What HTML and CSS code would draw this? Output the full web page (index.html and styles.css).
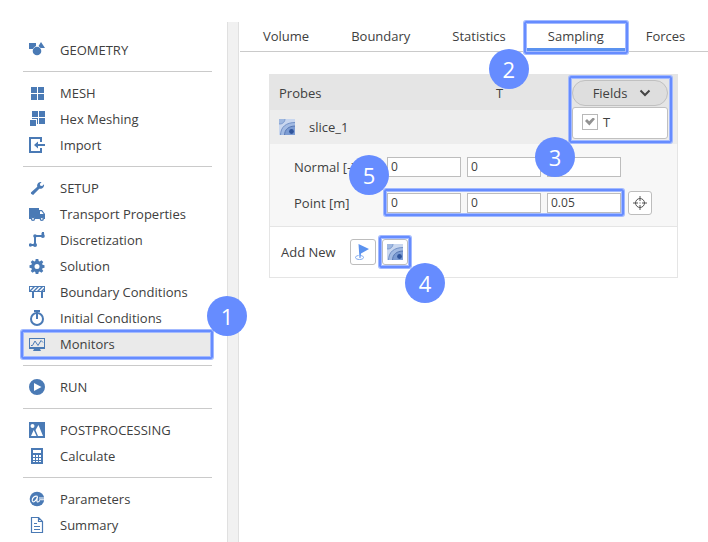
FILE: index.html
```html
<!DOCTYPE html>
<html lang="en">
<head>
<meta charset="utf-8">
<title>Monitors - Sampling</title>
<link rel="stylesheet" href="styles.css">
</head>
<body>
<svg class="defs" aria-hidden="true">
  <symbol id="slice" viewBox="0 0 16 16">
    <path fill="#c9d7ef" d="M0 0h16v16H0z"/>
    <circle cx="1" cy="0" r="5" fill="#9fb8e0" stroke="#7f9dce"/>
    <path fill="#a3bbe3" stroke="#7391c6" d="M1.500 16.500C1.500 8 7 3.500 16.500 3.500v13z"/>
    <path fill="#7c9cd3" stroke="#5878b3" d="M5.500 16.500C5.500 10.500 9.500 7 16.500 7v9.500z"/>
    <circle cx="12.500" cy="12.500" r="2.400" fill="#2f549b"/>
  </symbol>
</svg>
<div class="app">
  <nav class="sidebar">
    <ul class="group">
      <li><a class="item" href="#geometry"><svg viewBox="0 0 16 16"><path d="M0 1h7v3a5 5 0 0 0-3 3H0zM12 0l4 6h-4.500L9.500 4z"/><circle cx="8" cy="9" r="4.300"/></svg>GEOMETRY</a></li>
    </ul>
    <ul class="group">
      <li><a class="item" href="#mesh"><svg viewBox="0 0 16 16"><path d="M2 2h6v6H2zM9 2h6v6H9zM2 9h6v6H2zM9 9h6v6H9z"/></svg>MESH</a></li>
      <li><a class="item" href="#hex"><svg viewBox="0 0 16 16"><path d="M3 0h6v6H3zM10 0h6v6h-6zM10 7h6v6h-6zM1 9h6v6H1zM3 7h6v6H8V8H3z"/></svg>Hex Meshing</a></li>
      <li><a class="item" href="#import"><svg viewBox="0 0 16 16"><path d="M0 0h13v5h-2V2H2v12h9v-3h2v5H0z"/><path d="M5 8l4-3.500V7h7v2H9v2.500z"/></svg>Import</a></li>
    </ul>
    <ul class="group">
      <li><a class="item" href="#setup"><svg viewBox="0 0 16 16"><path d="M2 13.800 1.900 12.500 8.300 6.800C7.600 4 9.500 1.600 12.600 2L10.800 4l.6 1.700 1.800.4L15 4.300c.5 3-1.900 5.100-4.700 4.400L4.100 15z"/></svg>SETUP</a></li>
      <li><a class="item" href="#transport"><svg viewBox="0 0 16 16"><path fill-rule="evenodd" d="M0 2h10v2h3l3 4v5h-1.200a2 2 0 0 0-4 0H6a2 2 0 0 0-4 0H0zM11 5.200V8h3.600l-2-2.800z"/><path fill-rule="evenodd" d="M4 10.600a2.200 2.200 0 1 1 0 4.400 2.200 2.200 0 0 1 0-4.400zm0 1.300a.9.9 0 1 0 0 1.800.9.9 0 0 0 0-1.800zM12.800 10.600a2.200 2.200 0 1 1 0 4.400 2.200 2.200 0 0 1 0-4.400zm0 1.300a.9.9 0 1 0 0 1.800.9.9 0 0 0 0-1.800z"/></svg>Transport Properties</a></li>
      <li><a class="item" href="#discretization"><svg viewBox="0 0 16 16"><path fill="none" stroke="currentColor" stroke-width="2" d="M0 13h6V4h8V0"/><circle cx="1.500" cy="13" r="1.700"/><circle cx="6" cy="13" r="2"/><circle cx="6" cy="4" r="1.800"/><circle cx="13.800" cy="4" r="2"/><circle cx="13.800" cy="1.500" r="1.300"/></svg>Discretization</a></li>
      <li><a class="item" href="#solution"><svg viewBox="0 0 16 16"><path fill-rule="evenodd" d="M6.700 1h2.600l.4 2 1 .4 1.700-1.200 1.900 1.900-1.200 1.700.4 1 2 .4v2.600l-2 .4-.4 1 1.200 1.700-1.900 1.900-1.700-1.200-1 .4-.4 2H6.700l-.4-2-1-.4-1.700 1.200-1.900-1.900 1.200-1.700-.4-1-2-.4V7.200l2-.4.4-1-1.200-1.700 1.900-1.900 1.700 1.200 1-.4zM8 6a2.500 2.500 0 1 0 0 5 2.500 2.500 0 0 0 0-5z"/></svg>Solution</a></li>
      <li><a class="item" href="#boundary"><svg viewBox="0 0 16 16"><path fill-rule="evenodd" d="M0 2h16v6h-2v6h-2V8H5v6H3V8H0zM1 3v3l3-3zM2 7h2l4-4H6zM6 7h2l4-4h-2zM10 7h2l3-3V3h-1zM14 7h1V6z"/></svg>Boundary Conditions</a></li>
      <li><a class="item" href="#initial"><svg viewBox="0 0 16 16"><g fill="none" stroke="currentColor" stroke-width="2"><circle cx="8" cy="9" r="6"/><path d="M8 1v8M5 1h6"/></g></svg>Initial Conditions</a></li>
      <li class="marked mark-row"><a class="item current" href="#monitors"><svg viewBox="0 0 16 16"><path fill-rule="evenodd" d="M0 2h16v11h-5l1 2H4l1-2H0zM1 3v8h14V3z"/><path fill="none" stroke="currentColor" d="M2 9.500h1.500L6 5l3 4.500 3-5 2 2"/></svg>Monitors</a><span class="badge badge-1">1</span></li>
    </ul>
    <ul class="group">
      <li><a class="item" href="#run"><svg viewBox="0 0 16 16"><path fill-rule="evenodd" d="M8 0a8 8 0 1 1 0 16A8 8 0 0 1 8 0zM5 4v8l7.500-4z"/></svg>RUN</a></li>
    </ul>
    <ul class="group">
      <li><a class="item" href="#post"><svg viewBox="0 0 16 16"><path fill-rule="evenodd" d="M0 0h16v16H0zM3.500 2a2 2 0 1 0 0 4 2 2 0 0 0 0-4zM2 14h5.500L4.700 8zM6.500 8l3-5L14 14H9z"/></svg>POSTPROCESSING</a></li>
      <li><a class="item" href="#calculate"><svg viewBox="0 0 16 16"><path fill-rule="evenodd" d="M2 0h12v16H2zM4 2v3h8V2zM4 7v2h2V7zM7 7v2h2V7zM10 7v2h2V7zM4 10v2h2v-2zM7 10v2h2v-2zM10 10v2h2v-2zM4 13v1h2v-1zM7 13v1h2v-1zM10 13v1h2v-1z"/></svg>Calculate</a></li>
    </ul>
    <ul class="group">
      <li><a class="item" href="#parameters"><svg viewBox="0 0 16 16"><circle cx="8" cy="8" r="7.300"/><path fill="none" stroke="#fff" stroke-width="1.100" d="M8.800 5.500C6 4 3 7 3.200 9.500c.3 2.700 4 1.200 5.300-3.500-.6 3-1 5 .3 5 .8 0 1.400-.6 1.900-1.500"/><path fill="#fff" d="M10.500 6H16v4h-5.500z"/><path d="M11 6.500h4v1h-4zM11 8.800h4v1h-4z"/></svg>Parameters</a></li>
      <li><a class="item" href="#summary"><svg viewBox="0 0 16 16"><path fill="none" stroke="currentColor" stroke-width="1.200" d="M2.500.5h7l4 4v11h-11zM9.500.5v4h4M5 6.500h3M5 9.500h6M5 12.500h6"/></svg>Summary</a></li>
    </ul>
  </nav>
  <div class="splitter"></div>
  <main class="main">
    <nav class="tabs">
      <a class="tab" href="#volume">Volume</a>
      <a class="tab" href="#boundary-tab">Boundary</a>
      <a class="tab" href="#statistics">Statistics</a>
      <span class="marked mark-tab"><a class="tab active" href="#sampling">Sampling</a><span class="badge badge-2">2</span></span>
      <a class="tab" href="#forces">Forces</a>
    </nav>
    <section class="panel">
      <header class="probes">
        <span>Probes</span>
        <span>T</span>
        <div class="fields marked mark-fields">
          <button class="pill" type="button" aria-expanded="true">Fields<svg viewBox="0 0 12 8"><path d="M1.500 1.500 6 6l4.500-4.500"/></svg></button>
          <div class="menu">
            <label class="option"><input type="checkbox" checked>T</label>
          </div>
          <span class="badge badge-3">3</span>
        </div>
      </header>
      <div class="probe"><svg class="slice"><use href="#slice"/></svg>slice_1</div>
      <div class="settings">
        <div class="row">
          <label for="nx">Normal [-]</label>
          <div class="vector">
            <input type="text" id="nx" value="0">
            <input type="text" aria-label="Normal y" value="0">
            <input type="text" aria-label="Normal z" value="">
          </div>
        </div>
        <div class="row">
          <label for="px">Point [m]</label>
          <div class="vector marked mark-point">
            <input type="text" id="px" value="0">
            <input type="text" aria-label="Point y" value="0">
            <input type="text" aria-label="Point z" value="0.05">
            <span class="badge badge-5">5</span>
          </div>
          <button class="square pick" type="button" aria-label="Pick point"><svg viewBox="0 0 14 14"><circle cx="7" cy="7" r="4.500"/><path d="M7 0v5M7 9v5M0 7h5M9 7h5M6.500 7h1"/></svg></button>
        </div>
      </div>
      <footer class="add">
        <span>Add New</span>
        <button class="square" type="button" aria-label="Point probe"><svg class="flag" viewBox="0 0 16 16"><path fill="none" stroke="#7ba6ec" d="M3.500 11.500c-2 .3-3 1-3 2 0 2.600 8 2.600 8 0 0-1-1-1.700-3-2"/><path fill="#5b92ef" d="M3.500 0 14 5 6 9.500 5.500 14h-1z"/></svg></button>
        <div class="marked mark-slice"><button class="square" type="button" aria-label="Slice probe"><svg class="slice"><use href="#slice"/></svg></button><span class="badge badge-4">4</span></div>
      </footer>
    </section>
  </main>
</div>
</body>
</html>
```
FILE: styles.css
```css
* { box-sizing: border-box; }

body {
  margin: 0;
  background: #fff;
  color: #404040;
  font: 13px/20px "Open Sans", "Noto Sans", sans-serif;
}

button, input { font: inherit; color: inherit; margin: 0; }
a { color: inherit; text-decoration: none; }
.defs { position: absolute; width: 0; height: 0; }

.app {
  display: flex;
  min-height: 100vh;
  padding-top: 22px;
}

/* Sidebar */
.sidebar { flex: 0 0 227px; padding: 7px 15px 0 23px; }
.group { list-style: none; margin: 0; padding: 8px 0; }
.group + .group { border-top: 1px solid #cacaca; }
.item {
  display: flex;
  align-items: center;
  gap: 15px;
  height: 26px;
  padding-left: 6px;
}
.item svg { width: 16px; height: 16px; fill: currentColor; color: #4a7ab5; }
.current { background: #eaeaea; }
.splitter {
  flex: 0 0 12px;
  background: #f1f1f1;
  border: 1px solid #e0e0e0;
  border-width: 0 1px;
}

/* Tabs */
.main { flex: 1; min-width: 0; }
.tabs {
  display: flex;
  height: 30px;
  padding-left: 2px;
  margin-left: 1px;
  border-bottom: 1px solid #cacaca;
}
.tab {
  display: block;
  height: 29px;
  padding: 4px 21px 0;
}
.active { border-bottom: 3px solid #5b92ef; }

/* Probe panel */
.panel { margin: 22px 30px 0; border: 1px solid #e5e5e5; }
.probes {
  display: grid;
  grid-template-columns: 217px 1fr 96px;
  align-items: center;
  height: 35px;
  padding: 0 9px;
  background: #e5e5e5;
}
.probe {
  display: flex;
  align-items: center;
  gap: 14px;
  height: 34px;
  padding-left: 9px;
  background: #ededed;
}
.slice { width: 16px; height: 16px; }
.pill {
  display: flex;
  align-items: center;
  justify-content: center;
  gap: 12px;
  width: 100%;
  height: 26px;
  padding: 0 0 0 4px;
  border: 1px solid #c0c0c0;
  border-radius: 13px;
  background: #dedede;
}
.pill svg { width: 12px; height: 8px; fill: none; stroke: #444; stroke-width: 2; }
.menu {
  position: absolute;
  z-index: 1;
  top: 27px;
  left: 0;
  right: 0;
  padding: 4px 9px 6px;
  border: 1px solid #c0c0c0;
  border-radius: 3px;
  background: #fff;
}
.option { display: flex; align-items: center; gap: 5px; }
.option input {
  appearance: none;
  width: 16px;
  height: 16px;
  border: 1px solid #b8b8b8;
  background: #fff;
}
.option input:checked::before {
  content: "";
  display: block;
  width: 10px;
  height: 8px;
  margin: 3px 2px;
  background: #929292;
  clip-path: polygon(0 45%, 20% 20%, 42% 48%, 80% 0, 100% 20%, 44% 100%);
}

.settings {
  display: grid;
  gap: 12px;
  padding: 11px 25px 11px 24px;
  background: #f7f7f7;
  border-bottom: 1px solid #e5e5e5;
}
.row { display: flex; align-items: center; height: 24px; }
.row label { width: 93px; }
.vector { display: flex; gap: 6px; }
.vector input {
  width: 74px;
  height: 20px;
  padding: 0 3px;
  border: 1px solid #bdbdbd;
  background: #fff;
  font-size: 12px;
}
.square {
  display: grid;
  place-items: center;
  width: 26px;
  height: 26px;
  padding: 0;
  border: 1px solid #bdbdbd;
  border-radius: 3px;
  background: #fff;
}
.pick { width: 24px; height: 24px; margin-left: 7px; }
.pick svg { width: 14px; height: 14px; fill: none; stroke: #555; }
.flag { width: 16px; height: 16px; }
.add {
  display: flex;
  align-items: center;
  gap: 6px;
  height: 50px;
  padding-left: 11px;
}
.add > span { width: 63px; }

/* Tutorial callouts */
.marked { position: relative; }
.marked::after {
  content: "";
  position: absolute;
  z-index: 2;
  inset: -3px;
  border: 2px solid #668cff;
  border-radius: 2px;
  box-shadow: 0 0 0 1px #a3baff, inset 0 0 0 1px #a3baff;
  pointer-events: none;
}
.mark-row::after { inset: -1px -1px -2px -2px; }
.mark-tab::after { inset: -1px -3px -3px; }
.mark-fields::after { inset: -4px -4px -37px -3px; }
.mark-point::after { inset: -4px -3px -3px; }
.badge {
  position: absolute;
  z-index: 3;
  width: 40px;
  height: 40px;
  border-radius: 50%;
  background: #668cff;
  color: #fff;
  font-size: 22px;
  line-height: 40px;
  text-align: center;
}
.badge-1 { right: -35px; bottom: 21px; }
.badge-2 { left: -38px; top: 27px; }
.badge-3 { left: -37px; top: 57px; }
.badge-4 { left: 23px; top: 24px; }
.badge-5 { left: -38px; bottom: 18px; }
```
